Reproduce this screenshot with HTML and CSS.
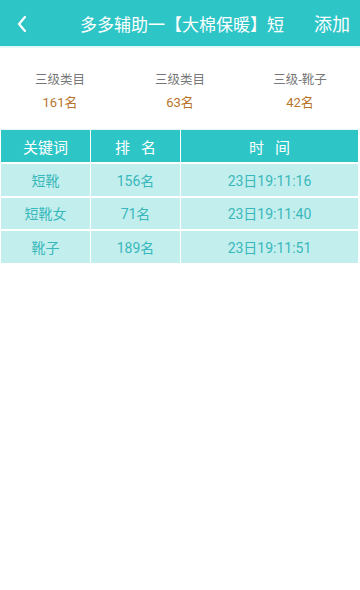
FILE: index.html
```html
<!DOCTYPE html>
<html lang="zh">
<head>
<meta charset="utf-8">
<link rel="stylesheet" href="styles.css">
</head>
<body>
<header class="topbar">
  <div class="back">
    <svg width="12" height="18" viewBox="0 0 12 18"><path d="M9 2 L3 9 L9 16" fill="none" stroke="#ffffff" stroke-width="2.2" stroke-linecap="round" stroke-linejoin="round"/></svg>
  </div>
  <div class="title">多多辅助一【大棉保暖】短</div>
  <div class="add">添加</div>
</header>
<section class="stats">
  <div class="stat"><div class="label">三级类目</div><div class="value">161名</div></div>
  <div class="stat"><div class="label">三级类目</div><div class="value">63名</div></div>
  <div class="stat"><div class="label">三级-靴子</div><div class="value">42名</div></div>
</section>
<section class="grid">
  <div class="cell head">关键词</div>
  <div class="cell head">排&nbsp;&nbsp;&nbsp;名</div>
  <div class="cell head">时&nbsp;&nbsp;&nbsp;间</div>
  <div class="cell">短靴</div>
  <div class="cell">156名</div>
  <div class="cell">23日19:11:16</div>
  <div class="cell">短靴女</div>
  <div class="cell">71名</div>
  <div class="cell">23日19:11:40</div>
  <div class="cell">靴子</div>
  <div class="cell">189名</div>
  <div class="cell">23日19:11:51</div>
</section>
</body>
</html>
```
FILE: styles.css
```css
html, body {
  margin: 0;
  padding: 0;
  background: #ffffff;
  font-family: Roboto, "Noto Sans CJK SC", sans-serif;
}
.topbar {
  height: 46px;
  background: #2ec5c7;
  display: flex;
  align-items: center;
  color: #ffffff;
  border-bottom: 2px solid #e3f8f8;
}
.back {
  width: 80px;
  padding-left: 16px;
  box-sizing: border-box;
  display: flex;
  align-items: center;
  padding-top: 1px;
}
.title {
  flex: 1;
  font-size: 17px;
  white-space: nowrap;
  overflow: hidden;
}
.add {
  font-size: 18px;
  padding-right: 10px;
}
.stats {
  display: grid;
  grid-template-columns: 1fr 1fr 1fr;
  padding-top: 23px;
  height: 82px;
  box-sizing: border-box;
  border-bottom: 1px solid #e6f9f9;
  text-align: center;
}
.label {
  font-size: 12.5px;
  color: #777777;
  line-height: 18px;
}
.value {
  font-size: 13px;
  color: #b8742e;
  line-height: 18px;
  margin-top: 5px;
}
.grid {
  display: grid;
  grid-template-columns: 89px 89px 1fr;
  grid-template-rows: 32px;
  grid-auto-rows: 31.5px;
  gap: 2px 1px;
  padding: 0 2px 0 1px;
}
.cell {
  background: #c3eeee;
  color: #38b8ba;
  font-size: 14px;
  display: flex;
  align-items: center;
  justify-content: center;
  white-space: nowrap;
}
.cell.head {
  background: #2ec5c7;
  color: #ffffff;
  font-size: 15px;
}
```
